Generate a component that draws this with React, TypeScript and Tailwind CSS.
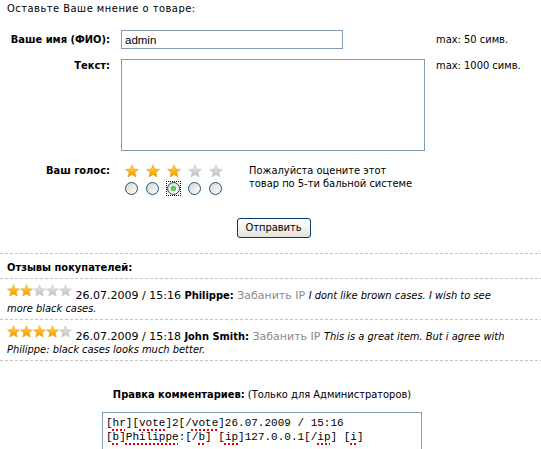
import { useId } from 'react'

const sans = 'font-["DejaVu_Sans",Verdana,sans-serif]'
const tahoma = 'font-["DejaVu_Sans_Condensed","DejaVu_Sans",Tahoma,sans-serif]'

const Dashes = () => (
  <div className="h-px w-full bg-[repeating-linear-gradient(90deg,#c4c4c4_0_3px,transparent_3px_5px)]" />
)

const Star = ({ on, size = 14 }: { on: boolean; size?: number }) => {
  const id = useId()
  return (
    <svg width={size} height={size} viewBox="0 0 14 14" className="block">
      <defs>
        <linearGradient id={id} x1="0" y1="0" x2="0" y2="1">
          <stop offset="0" stopColor={on ? '#ffe27a' : '#ececec'} />
          <stop offset="0.55" stopColor={on ? '#fbb414' : '#d2d2d2'} />
          <stop offset="1" stopColor={on ? '#f29300' : '#bdbdbd'} />
        </linearGradient>
      </defs>
      <path
        d="M7 0.7 L8.76 5.07 L13.47 5.4 L9.85 8.43 L11 13 L7 10.5 L3 13 L4.15 8.43 L0.53 5.4 L5.24 5.07 Z"
        fill={`url(#${id})`}
        stroke={on ? '#e59a10' : '#c2c2c2'}
        strokeWidth="0.6"
        strokeLinejoin="round"
      />
    </svg>
  )
}

const Radio = ({ checked }: { checked?: boolean }) => (
  <div
    className={`flex h-[15px] w-[15px] items-center justify-center ${
      checked ? 'border border-dotted border-black' : ''
    }`}
  >
    <div className="flex h-[13px] w-[13px] items-center justify-center rounded-full border border-[#1c5180] bg-linear-to-br from-[#d6d6ce] to-white">
      {checked && (
        <div className="h-[5px] w-[5px] rounded-full bg-radial from-[#6ee36e] to-[#14a014]" />
      )}
    </div>
  </div>
)

const RowStars = ({ count }: { count: number }) => (
  <span className="inline-flex align-[2px]">
    {[0, 1, 2, 3, 4].map((i) => (
      <Star key={i} on={i < count} size={13} />
    ))}
  </span>
)

// spell-checker squiggle from the browser
const Sp = ({ children }: { children: React.ReactNode }) => (
  <span className="underline decoration-red-600 decoration-dotted decoration-2 underline-offset-[3px]">
    {children}
  </span>
)

const reviews = [
  {
    vote: 2,
    date: '26.07.2009 / 15:16',
    name: 'Philippe:',
    first: 'I dont like brown cases. I wish to see',
    rest: 'more black cases.',
  },
  {
    vote: 4,
    date: '26.07.2009 / 15:18',
    name: 'John Smith:',
    first: 'This is a great item. But i agree with',
    rest: 'Philippe: black cases looks much better.',
  },
]

export default function App() {
  return (
    <div className="min-h-[449px] w-[541px] bg-white text-black">
      <p className={`${tahoma} px-[7px] pt-[2px] text-[11px] leading-[13px] tracking-[0.5px]`}>
        Оставьте Ваше мнение о товаре:
      </p>

      <div className={`${tahoma} mt-[15px] grid grid-cols-[110px_304px_1fr] gap-x-[11px] text-[11px] leading-[13px]`}>
        <label className="self-center text-right font-bold">Ваше имя (ФИО):</label>
        <input
          defaultValue="admin"
          className="h-[19px] w-[222px] border border-[#7f9db9] px-[3px] font-['Liberation_Sans',Arial,sans-serif] text-[11.5px] outline-none"
        />
        <span className="self-center">max: 50 симв.</span>

        <label className="mt-[10px] self-start text-right font-bold">Текст:</label>
        <textarea className="mt-[10px] h-[92px] w-[304px] resize-none border border-[#7f9db9] outline-none" />
        <span className="mt-[10px] self-start">max: 1000 симв.</span>

        <label className="mt-[12px] self-start pt-[1px] text-right font-bold">Ваш голос:</label>
        <div className="mt-[12px] flex">
          <div className="flex flex-col">
            <div className="flex h-[16px]">
              {[0, 1, 2, 3, 4].map((i) => (
                <div key={i} className="flex w-[21px] items-center justify-center">
                  <Star on={i < 3} />
                </div>
              ))}
            </div>
            <div className="mt-[2px] flex h-[15px]">
              {[0, 1, 2, 3, 4].map((i) => (
                <div key={i} className="flex w-[21px] items-center justify-center">
                  <Radio checked={i === 2} />
                </div>
              ))}
            </div>
          </div>
          <p className="ml-[23px] pt-[1px]">
            Пожалуйста оцените этот
            <br />
            товар по 5-ти бальной системе
          </p>
        </div>
        <span />
      </div>

      <div className="mt-[22px] flex justify-center pl-[6px]">
        <button
          className={`${tahoma} h-[20px] w-[74px] rounded-[3px] border border-[#003c74] bg-linear-to-b from-white to-[#e4e3dc] text-[11px]`}
        >
          Отправить
        </button>
      </div>

      <div className="mt-[15px]">
        <Dashes />
      </div>
      <p className={`${tahoma} px-[7px] pb-[4px] pt-[7px] text-[11px] font-bold leading-[13px]`}>
        Отзывы покупателей:
      </p>
      <Dashes />

      {reviews.map((r) => (
        <div key={r.date}>
          <div className={`${sans} whitespace-nowrap pb-[4px] pl-[7px] pt-[5px] text-[11px] leading-[13px]`}>
            <RowStars count={r.vote} /> {r.date} <b className={tahoma}>{r.name}</b>{' '}
            <span className="text-[#8a8a8a]">Забанить IP</span>{' '}
            <i className={tahoma}>{r.first}</i>
            <br />
            <i className={tahoma}>{r.rest}</i>
          </div>
          <Dashes />
        </div>
      ))}

      <div className="flex w-[524px] flex-col items-center">
        <p className={`${tahoma} mt-[27px] text-[11px] leading-[13px]`}>
          <b>Правка комментариев:</b> (Только для Администраторов)
        </p>
        <div className="mt-[11px] h-[38px] w-[320px] overflow-hidden border border-b-0 border-[#7f9db9] px-[3px] pt-[3px] font-['Liberation_Mono','Courier_New',monospace] text-[11px] leading-[14px]">
          [<Sp>hr</Sp>][<Sp>vote</Sp>]2[/<Sp>vote</Sp>]26.07.2009 / 15:16
          <br />[<Sp>b</Sp>]<Sp>Philippe</Sp>:[/<Sp>b</Sp>] [<Sp>ip</Sp>]127.0.0.1[/<Sp>ip</Sp>] [<Sp>i</Sp>]
        </div>
      </div>
    </div>
  )
}
